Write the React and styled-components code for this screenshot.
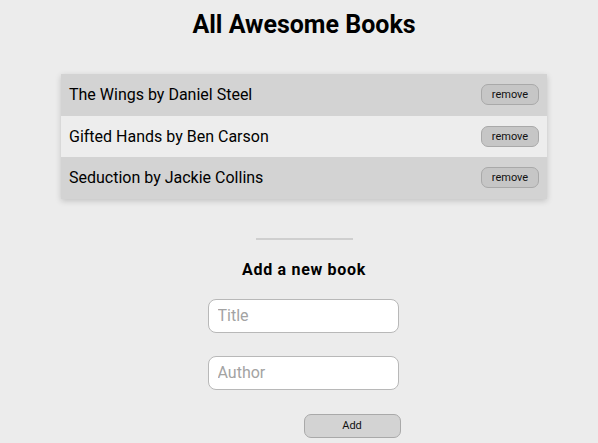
import React, { useState } from 'react';
import styled, { createGlobalStyle } from 'styled-components';

const GlobalStyle = createGlobalStyle`
  body {
    margin: 0;
    background-color: #ececec;
    font-family: Roboto, "Helvetica Neue", Arial, sans-serif;
    color: #000;
  }
`;

const Page = styled.div`
  display: flex;
  flex-direction: column;
  align-items: center;
  padding: 0 0 0 10px;
`;

const Heading = styled.h1`
  margin: 10px 0 0;
  font-size: 25px;
  line-height: 29px;
  font-weight: 700;
`;

const BookList = styled.ul`
  list-style: none;
  margin: 35px 0 0;
  padding: 0;
  width: 486px;
  box-shadow: 0 2px 6px rgba(0, 0, 0, 0.18);
`;

const BookRow = styled.li`
  display: flex;
  align-items: center;
  justify-content: space-between;
  height: 41.5px;
  padding: 0 8px;
  background-color: ${props => (props.odd ? '#d3d3d3' : '#ededed')};
  font-size: 16px;
`;

const SmallButton = styled.button`
  font-family: Roboto, "Helvetica Neue", Arial, sans-serif;
  font-size: 11px;
  color: #111;
  background-color: ${props => (props.light ? '#d3d3d3' : '#c6c6c6')};
  border: 1px solid #a9a9a9;
  border-radius: 7px;
  cursor: pointer;
  padding: 0;
`;

const RemoveButton = styled(SmallButton)`
  width: 58px;
  height: 21px;
`;

const Divider = styled.hr`
  width: 97px;
  margin: 39px 0 0;
  border: none;
  border-top: 2px solid #cfcfcf;
`;

const SubHeading = styled.h2`
  margin: 20px 0 0;
  font-size: 16px;
  line-height: 20px;
  font-weight: 700;
  letter-spacing: 0.7px;
`;

const Form = styled.form`
  display: flex;
  flex-direction: column;
  width: 193px;
  margin-top: 19px;
`;

const Field = styled.input`
  box-sizing: border-box;
  width: 191px;
  height: 34px;
  margin-bottom: 23px;
  padding: 0 9px;
  font-family: Roboto, "Helvetica Neue", Arial, sans-serif;
  font-size: 16px;
  background: #fff;
  border: 1px solid #b8b8b8;
  border-radius: 8px;
  outline: none;

  &::placeholder {
    color: #a3a3a3;
  }
`;

const AddButton = styled(SmallButton)`
  align-self: flex-end;
  width: 97px;
  height: 24px;
  margin-top: 1px;
`;

const initialBooks = [
  { title: 'The Wings', author: 'Daniel Steel' },
  { title: 'Gifted Hands', author: 'Ben Carson' },
  { title: 'Seduction', author: 'Jackie Collins' },
];

export default function App() {
  const [books, setBooks] = useState(initialBooks);
  const [title, setTitle] = useState('');
  const [author, setAuthor] = useState('');

  const addBook = (e) => {
    e.preventDefault();
    if (!title || !author) return;
    setBooks([...books, { title, author }]);
    setTitle('');
    setAuthor('');
  };

  return (
    <>
      <GlobalStyle />
      <Page>
        <Heading>All Awesome Books</Heading>
        <BookList>
          {books.map((book, i) => (
            <BookRow key={i} odd={i % 2 === 0}>
              <span>{book.title} by {book.author}</span>
              <RemoveButton onClick={() => setBooks(books.filter((_, j) => j !== i))}>remove</RemoveButton>
            </BookRow>
          ))}
        </BookList>
        <Divider />
        <SubHeading>Add a new book</SubHeading>
        <Form onSubmit={addBook}>
          <Field placeholder="Title" value={title} onChange={e => setTitle(e.target.value)} />
          <Field placeholder="Author" value={author} onChange={e => setAuthor(e.target.value)} />
          <AddButton type="submit" light>Add</AddButton>
        </Form>
      </Page>
    </>
  );
}
